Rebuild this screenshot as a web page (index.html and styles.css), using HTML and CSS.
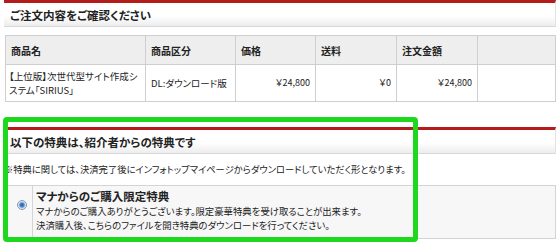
FILE: index.html
```html
<!DOCTYPE html>
<html lang="ja">
<head>
  <meta charset="UTF-8" />
  <title>ご注文内容をご確認ください</title>
  <link rel="stylesheet" href="styles.css">
</head>
<body>
  <div class="page">
    <!-- Order confirmation -->
    <div class="box-head">
      <h2>ご注文内容をご確認ください</h2>
    </div>

    <table class="order-table">
      <tr>
        <th class="col-name">商品名</th>
        <th class="col-type">商品区分</th>
        <th class="col-price">価格</th>
        <th class="col-ship">送料</th>
        <th class="col-total">注文金額</th>
        <th></th>
      </tr>
      <tr>
        <td class="name">【上位版】次世代型サイト作成シ<br>ステム「SIRIUS」</td>
        <td class="nowrap">DL:ダウンロード版</td>
        <td class="num">￥24,800</td>
        <td class="num">￥0</td>
        <td class="num">￥24,800</td>
        <td></td>
      </tr>
    </table>

    <!-- Bonus section -->
    <div class="bonus">
      <div class="box-head">
        <h2>以下の特典は、紹介者からの特典です</h2>
      </div>
      <p class="note">※特典に関しては、決済完了後にインフォトップマイページからダウンロードしていただく形となります。</p>

      <table class="bonus-table">
        <tr>
          <td class="radio-cell"><span class="radio"></span></td>
          <td class="bonus-body">
            <h3>マナからのご購入限定特典</h3>
            <p>マナからのご購入ありがとうございます。限定豪華特典を受け取ることが出来ます。<br>
            決済購入後、こちらのファイルを開き特典のダウンロードを行ってください。</p>
          </td>
        </tr>
      </table>
    </div>
  </div>

  <!-- highlight marker -->
  <div class="highlight"></div>
</body>
</html>
```

FILE: styles.css
```css
* {
  margin: 0;
  padding: 0;
  box-sizing: border-box;
}

body {
  font-family: "Noto Sans CJK JP", "Liberation Sans", sans-serif;
  font-feature-settings: "palt";
  background: #fff;
  color: #222;
  width: 560px;
  height: 244px;
  overflow: hidden;
  position: relative;
}

.page {
  padding: 0 4px 0 4px;
}

/* Heading box with red top rule */
.box-head {
  border-top: 3px solid #b41c1c;
  background: linear-gradient(#fff 0%, #fff 55%, #ededed 100%);
  border-bottom: 1px solid #d8d8d8;
  border-right: 1px solid #e2e2e2;
  height: 27px;
  display: flex;
  align-items: center;
  padding-left: 6px;
}

.box-head h2 {
  font-size: 11.5px;
  font-weight: bold;
  color: #222;
}

/* Order table */
.order-table {
  margin-top: 8px;
  margin-left: 1px;
  width: 551px;
  border-collapse: collapse;
  font-size: 9.5px;
}

.order-table th,
.order-table td {
  border: 1px solid #cfcfcf;
  padding: 0 5px;
  text-align: left;
  vertical-align: middle;
}

.order-table th {
  background: #eeeeee;
  height: 29px;
  font-size: 10px;
  font-weight: bold;
}

.order-table td {
  height: 37px;
  line-height: 14px;
}

.order-table td.name {
  padding: 0 1px 0 3px;
  white-space: nowrap;
}

.order-table td.nowrap {
  white-space: nowrap;
}

.col-name { width: 140px; }
.col-type { width: 90px; }
.col-price { width: 80px; }
.col-ship { width: 81px; }
.col-total { width: 81px; }

.order-table td.num {
  text-align: right;
  font-size: 9px;
}

/* Bonus area */
.bonus {
  margin-top: 25px;
}

.note {
  font-size: 9.3px;
  margin-top: 8px;
  height: 17px;
}

.bonus-table {
  width: 552px;
  border-collapse: collapse;
  margin-top: 6px;
}

.bonus-table td {
  border: 1px solid #d4d4d4;
  background: #f7f7f7;
  vertical-align: top;
}

.radio-cell {
  width: 28px;
  padding-top: 5px;
  text-align: center;
}

.radio {
  display: inline-block;
  width: 10px;
  height: 10px;
  border-radius: 50%;
  border: 1px solid #8a9bb0;
  background: radial-gradient(circle, #2a5a9a 0, #4b86c8 2px, #a9c6e6 3px, #eef2f7 4px);
  margin-left: 6px;
}

.bonus-body {
  padding: 2px 4px 6px 3px;
  background: #fbfbfb;
}

.bonus-body h3 {
  font-size: 11.5px;
  font-weight: bold;
  line-height: 16px;
}

.bonus-body p {
  font-size: 9.4px;
  line-height: 14px;
}

/* green marker drawn over the screenshot */
.highlight {
  position: absolute;
  left: 3px;
  top: 117px;
  width: 415px;
  height: 125px;
  border: 5px solid #1ed81e;
  border-radius: 4px;
}
```
